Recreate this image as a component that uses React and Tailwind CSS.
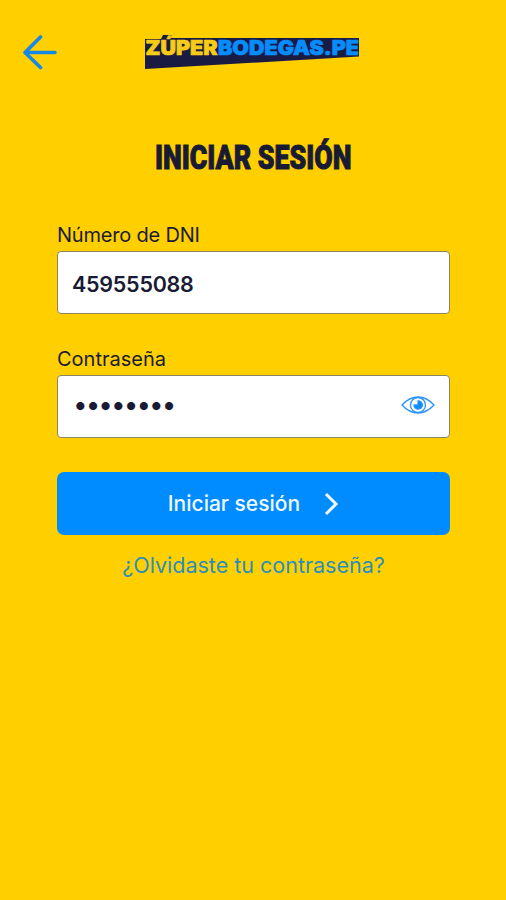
import React, { useState } from "react";

const Logo = () => (
  <svg width="218" height="38" viewBox="0 0 218 38" aria-label="ZÚPERBODEGAS.PE">
    <path d="M1 5H17L19 1H28L27 4H215V22.5L1 35Z" fill="#191b43" />
    <g fontFamily="Inter, sans-serif" fontWeight="900" fontSize="20" strokeWidth="0.7" strokeLinejoin="round">
      <text x="1.5" y="21" textLength="72" lengthAdjust="spacingAndGlyphs" fill="#f6cc17" stroke="#f6cc17">ZÚPER</text>
      <text x="74" y="21" textLength="141" lengthAdjust="spacingAndGlyphs" fill="#078cfc" stroke="#078cfc">BODEGAS.PE</text>
    </g>
  </svg>
);

const BackIcon = () => (
  <svg width="36" height="36" viewBox="0 0 36 36" fill="none" stroke="#1688e8" strokeWidth="3.6" strokeLinecap="round" strokeLinejoin="round">
    <path d="M18.5 3L3 18.5L18.5 33.5M3 18.5H33" />
  </svg>
);

const EyeIcon = () => (
  <svg width="34" height="18" viewBox="0 0 34 18" fill="none" stroke="#2b94fb" strokeWidth="1.3">
    <path d="M1 9C6 3.5 11 1 17 1S28 3.5 33 9C28 14.5 23 17 17 17S6 14.5 1 9Z" />
    <circle cx="17" cy="9" r="7.5" />
    <path d="M17 4.8V9H13A4.2 4.2 0 1 0 17 4.8Z" fill="#078cfc" />
  </svg>
);

const App = () => {
  const [dni, setDni] = useState("459555088");
  const [password, setPassword] = useState("12345678");
  const [visible, setVisible] = useState(false);

  return (
    <div className="min-h-screen bg-[#ffcf00] font-['Inter',sans-serif] text-[#191b35]">
      <header className="grid grid-cols-[1fr_218px_1fr] items-start pt-[34px]">
        <button type="button" aria-label="Volver" className="ml-[22px] w-9">
          <BackIcon />
        </button>
        <Logo />
      </header>

      <main className="pr-14 pl-[57px]">
        <h1 className="mt-[65px] flex h-10 items-center justify-center font-['Roboto',sans-serif] text-[34px] leading-10 font-black whitespace-nowrap [-webkit-text-stroke:1px_#191b35]">
          <span className="scale-x-[0.785]">INICIAR SESIÓN</span>
        </h1>

        <form onSubmit={(e) => e.preventDefault()}>
          <label htmlFor="dni" className="mt-[44px] block h-[30px] text-[20px] leading-7 tracking-[-0.2px]">
            Número de DNI
          </label>
          <input
            id="dni"
            value={dni}
            onChange={(e) => setDni(e.target.value)}
            className="block h-[63px] w-full rounded-[4px] border border-[#8c8460] bg-white px-[14px] pt-[3px] text-[21.5px] font-semibold tracking-[-0.25px] outline-none"
          />

          <label htmlFor="password" className="mt-[31px] block h-[30px] text-[20px] leading-7">
            Contraseña
          </label>
          <div className="flex h-[63px] items-center rounded-[4px] border border-[#8c8460] bg-white pr-[14px] pl-[15px]">
            <input
              id="password"
              type={visible ? "text" : "password"}
              value={password}
              onChange={(e) => setPassword(e.target.value)}
              className="min-w-0 flex-1 pb-1 text-[26px] tracking-[-1.95px] outline-none"
            />
            <button type="button" aria-label="Mostrar contraseña" onClick={() => setVisible(!visible)} className="pb-[3px]">
              <EyeIcon />
            </button>
          </div>

          <button
            type="submit"
            className="mt-[34px] flex h-[63px] w-full items-center justify-center gap-6 rounded-[7px] bg-[#008cff] text-[21px] font-medium text-[#f1f8ff]"
          >
            Iniciar sesión
            <svg width="15" height="24" viewBox="0 0 15 24" fill="none" stroke="currentColor" strokeWidth="3">
              <path d="M2 2L12 12L2 22" />
            </svg>
          </button>
        </form>

        <a href="#" className="mt-4 block text-center text-[21.5px] leading-7 text-[#2b8fbd]">
          ¿Olvidaste tu contraseña?
        </a>
      </main>
    </div>
  );
};

export default App;
